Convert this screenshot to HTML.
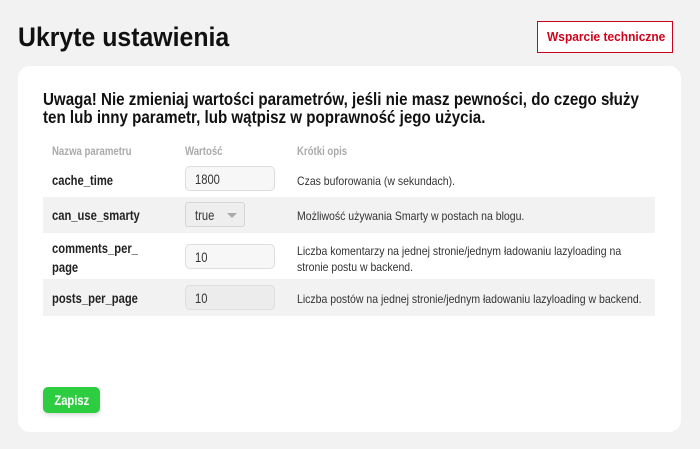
<!DOCTYPE html>
<html><head><meta charset="utf-8"><style>
body{margin:0;width:700px;height:449px;background:#f2f2f2;font-family:"Liberation Sans",sans-serif;position:relative;overflow:hidden;color:#222}
.c{display:inline-block;transform:scaleX(.8);transform-origin:left center;white-space:nowrap}
.a{position:absolute}
h1{position:absolute;left:18px;top:22px;margin:0;font-size:27px;font-weight:bold;color:#111}
h1 .c{transform:scaleX(.92)}
.btn{left:537px;top:21px;width:134px;height:30px;border:1px solid #d0021b;background:#fff;color:#d0021b;font-size:13px;font-weight:bold;line-height:30px;box-sizing:content-box}
.btn .c{transform:scaleX(.92)}
.card{left:18px;top:66px;width:663px;height:366px;background:#fff;border-radius:12px}
.warn{left:43px;font-size:17.5px;font-weight:bold;color:#111}
.warn .c{transform:scaleX(.865)}
.th{top:144px;font-size:12px;font-weight:bold;color:#aaa}
.row{left:43px;width:612px}
.g{background:#f2f2f2}
.nm{left:52px;font-size:14px;font-weight:bold;color:#222}
.inp{left:185px;width:90px;height:25px;border:1px solid #ddd;border-radius:5px;background:#f7f7f7;font-size:14px;line-height:25px;box-sizing:border-box;padding-left:9px;color:#333}
.ds{left:297px;font-size:12px;color:#333}
.ds .c{transform:scaleX(.874)}
.save{left:43px;top:387px;width:57px;height:26px;background:#2ecc40;border-radius:5px;color:#fff;font-weight:bold;font-size:14px;line-height:26px;text-align:center;box-shadow:0 2px 4px rgba(0,0,0,.15)}
</style></head><body>
<h1><span class="c">Ukryte ustawienia</span></h1>
<div class="a btn"><span class="c" style="margin-left:9px">Wsparcie techniczne</span></div>
<div class="a card"></div>
<div class="a warn" style="top:89px"><span class="c">Uwaga! Nie zmieniaj wartości parametrów, jeśli nie masz pewności, do czego służy</span></div>
<div class="a warn" style="top:107px"><span class="c">ten lub inny parametr, lub wątpisz w poprawność jego użycia.</span></div>
<div class="a th" style="left:52px"><span class="c">Nazwa parametru</span></div>
<div class="a th" style="left:185px"><span class="c">Wartość</span></div>
<div class="a th" style="left:297px"><span class="c">Krótki opis</span></div>

<div class="a row g" style="top:197px;height:36px"></div>
<div class="a row g" style="top:279px;height:37px"></div>

<div class="a nm" style="top:172px"><span class="c">cache_time</span></div>
<div class="a inp" style="top:166px;background:#f7f7f7"><span class="c">1800</span></div>
<div class="a ds" style="top:174px"><span class="c">Czas buforowania (w sekundach).</span></div>

<div class="a nm" style="top:207px"><span class="c">can_use_smarty</span></div>
<div class="a inp" style="top:202px;width:60px;background:#eee;border-color:#d5d5d5;border-radius:3px"><span class="c">true</span><span class="a" style="left:41px;top:10px;width:0;height:0;border-left:5px solid transparent;border-right:5px solid transparent;border-top:5px solid #aaa"></span></div>
<div class="a ds" style="top:209px"><span class="c">Możliwość używania Smarty w postach na blogu.</span></div>

<div class="a nm" style="top:240px"><span class="c">comments_per_</span></div>
<div class="a nm" style="top:259px"><span class="c">page</span></div>
<div class="a inp" style="top:244px"><span class="c">10</span></div>
<div class="a ds" style="top:244px"><span class="c">Liczba komentarzy na jednej stronie/jednym ładowaniu lazyloading na</span></div>
<div class="a ds" style="top:260px"><span class="c">stronie postu w backend.</span></div>

<div class="a nm" style="top:290px"><span class="c">posts_per_page</span></div>
<div class="a inp" style="top:285px;background:#ececec"><span class="c">10</span></div>
<div class="a ds" style="top:292px"><span class="c">Liczba postów na jednej stronie/jednym ładowaniu lazyloading w backend.</span></div>

<div class="a save"><span class="c" style="transform-origin:center">Zapisz</span></div>
</body></html>
